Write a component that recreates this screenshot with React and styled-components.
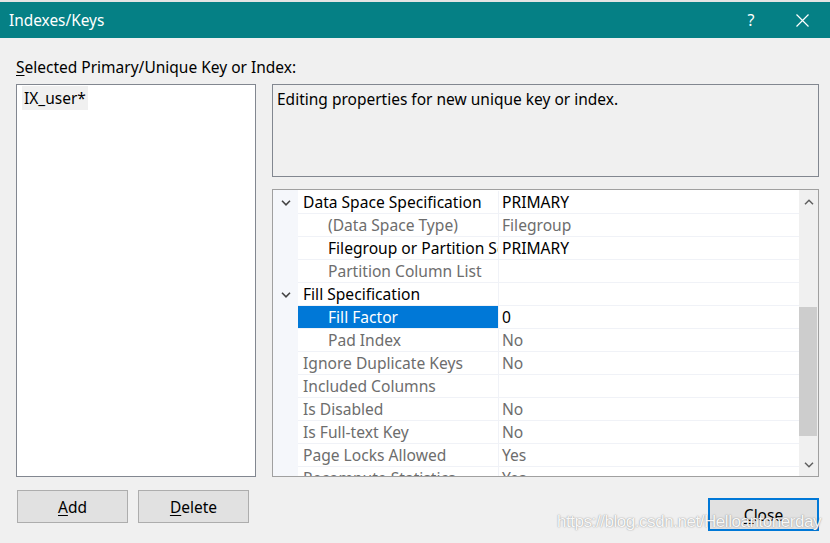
import React from "react";
import styled, { createGlobalStyle } from "styled-components";

const Global = createGlobalStyle`
  html, body { margin: 0; padding: 0; background: #f0f0f0; }
  body { width: 830px; height: 543px; overflow: hidden; font-family: "Noto Sans", "Open Sans", sans-serif; }
`;

const Window = styled.div`
  position: relative;
  width: 830px;
  height: 543px;
  display: flex;
  flex-direction: column;
  background: #f0f0f0;
  border-top: 2px solid #e4e4e4;
  box-sizing: border-box;
`;

const TitleBar = styled.div`
  height: 36px;
  background: #058085;
  display: flex;
  align-items: center;
  color: #fff;
  font-size: 15.4px;
  padding-left: 9px;
`;

const Title = styled.div`
  flex: 1;
`;

const TitleBtn = styled.div`
  width: ${(p) => p.w}px;
  display: flex;
  justify-content: center;
  align-items: center;
  font-size: 16px;
`;

const Body = styled.div`
  flex: 1;
  padding: 19px 11px 0 16px;
  display: flex;
  flex-direction: column;
`;

const Label = styled.div`
  font-size: 15.5px;
  color: #000;
  height: 27px;
  line-height: 20px;
  u { text-decoration: underline; text-underline-offset: 2px; }
`;

const Main = styled.div`
  display: flex;
  gap: 16px;
  height: 393px;
`;

const ListBox = styled.div`
  width: 240px;
  background: #fff;
  border: 1px solid #828790;
  box-sizing: border-box;
  padding: 1px 5px;
`;

const ListItem = styled.div`
  display: inline-block;
  background: #f0f0f0;
  color: #000;
  font-size: 15.5px;
  padding: 0 2px;
  height: 24px;
  line-height: 24px;
`;

const RightCol = styled.div`
  width: 547px;
  display: flex;
  flex-direction: column;
  gap: 12px;
`;

const Desc = styled.div`
  height: 93px;
  border: 1px solid #828790;
  box-sizing: border-box;
  padding: 3px 4px;
  font-size: 15.5px;
  color: #000;
  background: #f0f0f0;
`;

const Grid = styled.div`
  height: 288px;
  border: 1px solid #a0a0a0;
  box-sizing: border-box;
  background: #fff;
  display: flex;
  overflow: hidden;
`;

const Rows = styled.div`
  flex: 1;
  display: flex;
  flex-direction: column;
  padding-top: 1px;
  background: linear-gradient(to right, #f5f7fb 25px, #fff 25px);
`;

const Row = styled.div`
  display: flex;
  height: 23px;
  flex-shrink: 0;
  font-size: 15.6px;
`;

const Gutter = styled.div`
  width: 25px;
  display: flex;
  align-items: center;
  justify-content: center;
  color: #444;
`;

const NameCell = styled.div`
  width: 201px;
  box-sizing: border-box;
  padding-left: ${(p) => (p.indent ? 30 : 5)}px;
  border-bottom: 1px solid #f0f2f7;
  border-right: 1px solid #f0f2f7;
  background: ${(p) => (p.sel ? "#0078d7" : "transparent")};
  color: ${(p) => (p.sel ? "#fff" : p.gray ? "#6d6d6d" : "#000")};
  white-space: nowrap;
  overflow: hidden;
  line-height: 22px;
`;

const ValueCell = styled.div`
  flex: 1;
  box-sizing: border-box;
  padding-left: 3px;
  border-bottom: 1px solid #f0f2f7;
  color: ${(p) => (p.gray ? "#6d6d6d" : "#000")};
  line-height: 22px;
  white-space: nowrap;
  overflow: hidden;
`;

const Scrollbar = styled.div`
  width: 19px;
  background: #f0f0f0;
  display: flex;
  flex-direction: column;
  align-items: center;
`;

const ScrollArrow = styled.div`
  height: 23px;
  width: 100%;
  display: flex;
  align-items: center;
  justify-content: center;
  color: #606060;
`;

const Track = styled.div`
  flex: 1;
  width: 100%;
  padding-top: 94px;
  padding-bottom: 17px;
  box-sizing: border-box;
  display: flex;
`;

const Thumb = styled.div`
  flex: 1;
  background: #cdcdcd;
  margin: 0 1px 0 0;
`;

const Footer = styled.div`
  display: flex;
  align-items: flex-start;
  padding-top: 13px;
`;

const Button = styled.div`
  width: 111px;
  height: 33px;
  box-sizing: border-box;
  border: ${(p) => (p.primary ? "2px solid #0078d7" : "1px solid #adadad")};
  background: #e1e1e1;
  display: flex;
  align-items: center;
  justify-content: center;
  font-size: 15.5px;
  color: #000;
  margin-left: ${(p) => p.ml || 0}px;
  margin-top: ${(p) => p.mt || 0}px;
  u { text-decoration: underline; text-underline-offset: 2px; }
`;

const Watermark = styled.div`
  position: absolute;
  left: 557px;
  top: 510px;
  font-family: "Liberation Sans", sans-serif;
  font-size: 17px;
  color: rgba(255, 255, 255, 0.95);
  text-shadow: 0 0 1px rgba(90, 90, 90, 0.55), 0 0 2px rgba(90, 90, 90, 0.3);
  letter-spacing: -0.45px;
  white-space: nowrap;
`;

const Chevron = ({ up, size = 10, w = 1.6 }) => (
  <svg width={size} height={size * 0.6} viewBox="0 0 10 6">
    <polyline
      points={up ? "1,5.2 5,1.2 9,5.2" : "1,0.8 5,4.8 9,0.8"}
      fill="none"
      stroke="currentColor"
      strokeWidth={w}
    />
  </svg>
);

const rows = [
  { cat: true, name: "Data Space Specification", value: "PRIMARY" },
  { indent: true, gray: true, name: "(Data Space Type)", value: "Filegroup" },
  { indent: true, name: "Filegroup or Partition Scheme Name", value: "PRIMARY" },
  { indent: true, gray: true, name: "Partition Column List", value: "" },
  { cat: true, name: "Fill Specification", value: "" },
  { indent: true, sel: true, name: "Fill Factor", value: "0" },
  { indent: true, gray: true, name: "Pad Index", value: "No" },
  { gray: true, name: "Ignore Duplicate Keys", value: "No" },
  { gray: true, name: "Included Columns", value: "" },
  { gray: true, name: "Is Disabled", value: "No" },
  { gray: true, name: "Is Full-text Key", value: "No" },
  { gray: true, name: "Page Locks Allowed", value: "Yes" },
  { gray: true, name: "Recompute Statistics", value: "Yes" },
];

export default function App() {
  return (
    <Window>
      <Global />
      <TitleBar>
        <Title>Indexes/Keys</Title>
        <TitleBtn w={46}>?</TitleBtn>
        <TitleBtn w={56}>
          <svg width="13" height="13" viewBox="0 0 13 13">
            <path d="M0.5 0.5 L12.5 12.5 M12.5 0.5 L0.5 12.5" stroke="#fff" strokeWidth="1.2" />
          </svg>
        </TitleBtn>
      </TitleBar>
      <Body>
        <Label>
          <u>S</u>elected Primary/Unique Key or Index:
        </Label>
        <Main>
          <ListBox>
            <ListItem>IX_user*</ListItem>
          </ListBox>
          <RightCol>
            <Desc>Editing properties for new unique key or index.</Desc>
            <Grid>
              <Rows>
                {rows.map((r, i) => (
                  <Row key={i}>
                    <Gutter>{r.cat && <Chevron />}</Gutter>
                    <NameCell indent={r.indent} sel={r.sel} gray={r.gray}>
                      {r.name}
                    </NameCell>
                    <ValueCell gray={r.gray}>{r.value}</ValueCell>
                  </Row>
                ))}
              </Rows>
              <Scrollbar>
                <ScrollArrow>
                  <Chevron up size={10} w={1.5} />
                </ScrollArrow>
                <Track>
                  <Thumb />
                </Track>
                <ScrollArrow>
                  <Chevron size={10} w={1.5} />
                </ScrollArrow>
              </Scrollbar>
            </Grid>
          </RightCol>
        </Main>
        <Footer>
          <Button ml={1}>
            <u>A</u>dd
          </Button>
          <Button ml={10}>
            <u>D</u>elete
          </Button>
          <Button primary ml={459} mt={8}>
            <u>C</u>lose
          </Button>
        </Footer>
      </Body>
      <Watermark>https://blog.csdn.net/Helloantonerday</Watermark>
    </Window>
  );
}
